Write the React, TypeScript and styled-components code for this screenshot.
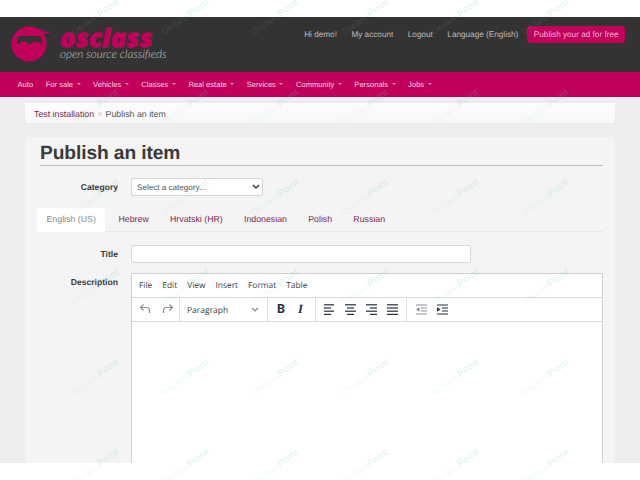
import React from "react";
import styled, { createGlobalStyle } from "styled-components";

const Global = createGlobalStyle`
  html, body { margin: 0; padding: 0; background: #fff; }
  body {
    font-family: "Liberation Sans", Arial, sans-serif;
    text-rendering: geometricPrecision;
  }
  * { box-sizing: border-box; }
`;

const Screen = styled.div`
  position: relative;
  width: 640px;
  height: 480px;
  overflow: hidden;
  padding-top: 17px;
  background: #fff;
`;

const Page = styled.div`
  height: 446px;
  overflow: hidden;
  background: #eeeeee;
  display: flex;
  flex-direction: column;
`;

const Header = styled.header`
  height: 55px;
  flex: none;
  background: #333333;
  display: flex;
  justify-content: space-between;
  padding: 9px 15px 0 11px;
`;

const Brand = styled.div`
  display: flex;
  gap: 8px;
  align-items: flex-start;
`;

const BrandText = styled.div`
  display: flex;
  flex-direction: column;
  padding-top: 1px;
`;

const BrandName = styled.span`
  font: italic 800 25.2px/22px "Open Sans", sans-serif;
  letter-spacing: 0.5px;
  color: #c2005c;
  -webkit-text-stroke: 0.9px #c2005c;
`;

const BrandTag = styled.span`
  font: italic 300 11.6px/11px Lato, sans-serif;
  color: #c8c8c8;
`;

const TopLinks = styled.nav`
  display: flex;
  align-items: flex-start;
  gap: 14.5px;
`;

const TopLink = styled.a`
  font-size: 8.2px;
  line-height: 17px;
  color: #bcbcbc;
`;

const PublishButton = styled.a`
  font-size: 8.2px;
  line-height: 17px;
  color: #eeb7d0;
  background: #c2005c;
  border-radius: 4px;
  padding: 0 6.5px;
  margin-left: -5.5px;
`;

const MainNav = styled.nav`
  height: 25px;
  flex: none;
  background: #c2005c;
  display: flex;
  align-items: center;
  gap: 12.5px;
  padding: 0 0 1px 17.5px;
`;

const NavItem = styled.a`
  font-size: 7.6px;
  color: #f5d6e4;
  display: flex;
  align-items: center;
  gap: 3.5px;
`;

const Caret = styled.i`
  width: 0;
  height: 0;
  border-left: 2px solid transparent;
  border-right: 2px solid transparent;
  border-top: 2px solid #e58db6;
`;

const Column = styled.main`
  width: 589.5px;
  margin: 6px 0 0 25px;
  display: flex;
  flex-direction: column;
  gap: 14px;
`;

const Breadcrumb = styled.div`
  height: 20px;
  background: linear-gradient(#fdfdfd, #f7f7f7);
  box-shadow: 0 0 2px #e2e2e2;
  display: flex;
  align-items: center;
  gap: 3.5px;
  padding: 1px 0 0 9px;
  font-size: 8.8px;
`;

const CrumbLink = styled.a`
  color: #7a1f4c;
`;

const CrumbSep = styled.span`
  color: #c5c5c5;
  font-size: 8px;
`;

const CrumbCurrent = styled.span`
  color: #555;
`;

const Panel = styled.section`
  height: 340px;
  background: #f4f4f4;
  padding: 0 12px 0 15px;
`;

const Title = styled.h1`
  margin: 0;
  height: 29px;
  padding-top: 6px;
  border-bottom: 1px solid #bdbdbd;
  font: 700 19.2px/22px "Liberation Sans", sans-serif;
  letter-spacing: -0.1px;
  color: #3a3a3a;
`;

const Row = styled.div<{ $top: number }>`
  display: flex;
  align-items: flex-start;
  margin-top: ${(p) => p.$top}px;
`;

const Label = styled.label`
  width: 78px;
  margin-right: 13px;
  flex: none;
  text-align: right;
  font-size: 8.6px;
  font-weight: 700;
  line-height: 18px;
  color: #3a3a3a;
`;

const SelectBox = styled.div`
  width: 132px;
  height: 18px;
  background: #fff;
  border: 1px solid #d6d6d6;
  border-radius: 2px;
  display: flex;
  align-items: center;
  justify-content: space-between;
  padding: 0 1px 0 5px;
  font-size: 8.1px;
  color: #555;
`;

const Tabs = styled.div`
  display: flex;
  margin: 12px 0 0 -3px;
  border-bottom: 1px solid #e8e8e8;
  height: 23.5px;
`;

const Tab = styled.a<{ $active?: boolean }>`
  height: 23.5px;
  line-height: 23px;
  padding: 0 ${(p) => (p.$active ? 9.5 : 10.6)}px;
  margin-right: ${(p) => (p.$active ? 2.5 : 0)}px;
  font-size: 8.8px;
  color: ${(p) => (p.$active ? "#888" : "#7c2a58")};
  background: ${(p) => (p.$active ? "#fff" : "transparent")};
`;

const TextInput = styled.div`
  width: 339.5px;
  height: 18px;
  background: #fff;
  border: 1px solid #d8d8d8;
  border-radius: 2px;
`;

const Editor = styled.div`
  flex: 1;
  height: 260px;
  background: #fff;
  border: 1px solid #d0d0d0;
`;

const MenuBar = styled.div`
  height: 24px;
  display: flex;
  align-items: center;
  gap: 10px;
  padding: 1px 0 0 7px;
  border-bottom: 1px solid #d8d8d8;
`;

const MenuItem = styled.span`
  font: 400 8.4px "Open Sans", sans-serif;
  color: #3a3f45;
`;

const Toolbar = styled.div`
  height: 24px;
  display: flex;
  border-bottom: 1px solid #d8d8d8;
`;

const Group = styled.div<{ $w: number; $pad: number; $gap: number; $last?: boolean }>`
  width: ${(p) => p.$w}px;
  flex: none;
  display: flex;
  align-items: center;
  gap: ${(p) => p.$gap}px;
  padding: 0 0 0 ${(p) => p.$pad}px;
  border-right: ${(p) => (p.$last ? "none" : "1px solid #e0e0e0")};
`;

const Format = styled.div`
  flex: 1;
  display: flex;
  align-items: center;
  justify-content: space-between;
  padding: 2px 7px 0 0;
  font: 400 8.5px "Open Sans", sans-serif;
  color: #3a3f45;
`;

const BoldGlyph = styled.span`
  font: 700 12.5px Roboto, sans-serif;
  color: #222f3e;
`;

const ItalicGlyph = styled.span`
  font: italic 700 12.5px "Liberation Serif", serif;
  color: #222f3e;
`;

const Marks = styled.div`
  position: absolute;
  left: 50px;
  top: -28px;
  display: grid;
  grid-template-columns: repeat(6, 90px);
  grid-auto-rows: 90px;
  pointer-events: none;
`;

const Mark = styled.span`
  display: flex;
  align-items: center;
  justify-content: center;
  transform: rotate(-35deg);
  font-size: 8.5px;
  letter-spacing: 0.2px;
  color: rgba(120, 215, 205, 0.16);
`;

const Pt = styled.b`
  font-weight: 400;
  font-size: 10px;
  color: rgba(110, 200, 190, 0.26);
`;

const Lines = ({ rows }: { rows: [number, number][] }) => (
  <svg width="11" height="11" viewBox="0 0 11 11">
    {rows.map(([a, b], i) => (
      <path key={i} d={`M${a} ${0.8 + i * 3.2}H${b}`} fill="none" stroke="#222f3e" strokeWidth="1.2" />
    ))}
  </svg>
);

const Undo = () => (
  <svg width="12" height="12" viewBox="0 0 12 12">
    <path d="M4.5 1.5 1.5 4.5l3 3M1.5 4.5H7.5a3 3 0 0 1 3 3v2.5" fill="none" stroke="#8a9097" strokeWidth="1.2" />
  </svg>
);

const Redo = () => (
  <svg width="12" height="12" viewBox="0 0 12 12">
    <path d="M7.5 1.5 10.5 4.5l-3 3M10.5 4.5H4.5a3 3 0 0 0-3 3v2.5" fill="none" stroke="#8a9097" strokeWidth="1.2" />
  </svg>
);

const Chevron = ({ color = "#7b8085", weight = 1.1 }: { color?: string; weight?: number }) => (
  <svg width="10" height="8" viewBox="0 0 10 8">
    <path d="M2 2 5 5 8 2" fill="none" stroke={color} strokeWidth={weight} />
  </svg>
);

const Indent = ({ out }: { out?: boolean }) => (
  <svg width="11" height="11" viewBox="0 0 11 11">
    <path
      d="M0 1H11M5 4H11M5 7H11M0 10H11"
      fill="none"
      strokeWidth="1.2"
      stroke={out ? "#8a9097" : "#222f3e"}
    />
    <path d={out ? "M3.5 3.3V7.7L0 5.5Z" : "M0 3.3V7.7L3.5 5.5Z"} fill={out ? "#8a9097" : "#222f3e"} />
  </svg>
);

const Logo = () => (
  <svg width="41" height="36" viewBox="0 0 41 36">
    <circle cx="18" cy="18" r="17.5" fill="#c2005c" />
    <path d="M27 6 33 1.5 31 5.5 41 6 31.5 8.5Z" fill="#c2005c" />
    <path
      d="M6 14Q6 10 10 10H27Q31 10 31 14V19C29 17 27 15.5 24 15.5 21 15.5 21 18 18.5 18S16 15.5 13 15.5C10 15.5 8 17 6 19Z"
      fill="#333"
    />
  </svg>
);

const nav = ["For sale", "Vehicles", "Classes", "Real estate", "Services", "Community", "Personals", "Jobs"];
const menus = ["File", "Edit", "View", "Insert", "Format", "Table"];
const langs = ["Hebrew", "Hrvatski (HR)", "Indonesian", "Polish", "Russian"];

export default function App() {
  return (
    <Screen>
      <Global />
      <Page>
        <Header>
          <Brand>
            <Logo />
            <BrandText>
              <BrandName>osclass</BrandName>
              <BrandTag>open source classifieds</BrandTag>
            </BrandText>
          </Brand>
          <TopLinks>
            <TopLink>Hi demo!</TopLink>
            <TopLink>My account</TopLink>
            <TopLink>Logout</TopLink>
            <TopLink>Language (English)</TopLink>
            <PublishButton>Publish your ad for free</PublishButton>
          </TopLinks>
        </Header>
        <MainNav>
          <NavItem>Auto</NavItem>
          {nav.map((n) => (
            <NavItem key={n}>
              {n}
              <Caret />
            </NavItem>
          ))}
        </MainNav>
        <Column>
          <Breadcrumb>
            <CrumbLink>Test installation</CrumbLink>
            <CrumbSep>»</CrumbSep>
            <CrumbCurrent>Publish an item</CrumbCurrent>
          </Breadcrumb>
          <Panel>
            <Title>Publish an item</Title>
            <Row $top={12}>
              <Label>Category</Label>
              <SelectBox>
                Select a category...
                <Chevron color="#333" weight={1.4} />
              </SelectBox>
            </Row>
            <Tabs>
              <Tab $active>English (US)</Tab>
              {langs.map((l) => (
                <Tab key={l}>{l}</Tab>
              ))}
            </Tabs>
            <Row $top={13}>
              <Label>Title</Label>
              <TextInput />
            </Row>
            <Row $top={10}>
              <Label>Description</Label>
              <Editor>
                <MenuBar>
                  {menus.map((m) => (
                    <MenuItem key={m}>{m}</MenuItem>
                  ))}
                </MenuBar>
                <Toolbar>
                  <Group $w={48} $pad={7} $gap={11}>
                    <Undo />
                    <Redo />
                  </Group>
                  <Group $w={88} $pad={7} $gap={0}>
                    <Format>
                      Paragraph
                      <Chevron />
                    </Format>
                  </Group>
                  <Group $w={48} $pad={9} $gap={13}>
                    <BoldGlyph>B</BoldGlyph>
                    <ItalicGlyph>I</ItalicGlyph>
                  </Group>
                  <Group $w={91} $pad={8} $gap={10}>
                    <Lines rows={[[0, 10], [0, 7], [0, 10], [0, 7]]} />
                    <Lines rows={[[0, 11], [2, 9], [0, 11], [2, 9]]} />
                    <Lines rows={[[0, 11], [4, 11], [0, 11], [4, 11]]} />
                    <Lines rows={[[0, 11], [0, 11], [0, 11], [0, 11]]} />
                  </Group>
                  <Group $w={46} $pad={9} $gap={10} $last>
                    <Indent out />
                    <Indent />
                  </Group>
                </Toolbar>
              </Editor>
            </Row>
          </Panel>
        </Column>
      </Page>
      <Marks aria-hidden>
        {Array.from({ length: 36 }, (_, i) => (
          <Mark key={i}>
            Osclass<Pt>Point</Pt>
          </Mark>
        ))}
      </Marks>
    </Screen>
  );
}
